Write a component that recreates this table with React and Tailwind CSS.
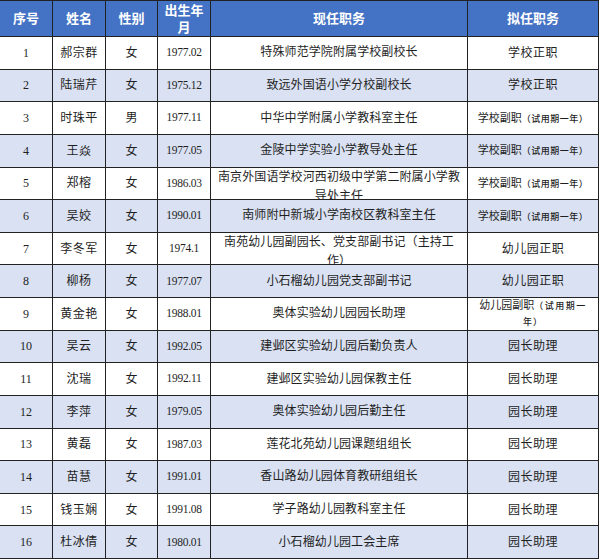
const rows = [
  ["1", "郝宗群", "女", "1977.02", ["特殊师范学院附属学校副校长"], "学校正职"],
  ["2", "陆瑞芹", "女", "1975.12", ["致远外国语小学分校副校长"], "学校正职"],
  ["3", "时珠平", "男", "1977.11", ["中华中学附属小学教科室主任"], "trial"],
  ["4", "王焱", "女", "1977.05", ["金陵中学实验小学教导处主任"], "trial"],
  ["5", "郑榕", "女", "1986.03", ["南京外国语学校河西初级中学第二附属小学教", "导处主任"], "trial"],
  ["6", "吴姣", "女", "1990.01", ["南师附中新城小学南校区教科室主任"], "trial"],
  ["7", "李冬军", "女", "1974.1", ["南苑幼儿园副园长、党支部副书记（主持工", "作）"], "幼儿园正职"],
  ["8", "柳杨", "女", "1977.07", ["小石榴幼儿园党支部副书记"], "幼儿园正职"],
  ["9", "黄金艳", "女", "1988.01", ["奥体实验幼儿园园长助理"], "kg-trial"],
  ["10", "吴云", "女", "1992.05", ["建邺区实验幼儿园后勤负责人"], "园长助理"],
  ["11", "沈瑞", "女", "1992.11", ["建邺区实验幼儿园保教主任"], "园长助理"],
  ["12", "李萍", "女", "1979.05", ["奥体实验幼儿园后勤主任"], "园长助理"],
  ["13", "黄磊", "女", "1987.03", ["莲花北苑幼儿园课题组组长"], "园长助理"],
  ["14", "苗慧", "女", "1991.01", ["香山路幼儿园体育教研组组长"], "园长助理"],
  ["15", "钱玉娴", "女", "1991.08", ["学子路幼儿园教科室主任"], "园长助理"],
  ["16", "杜冰倩", "女", "1980.01", ["小石榴幼儿园工会主席"], "园长助理"],
];

const cell =
  "flex justify-center overflow-hidden border-r border-b border-[#222] text-center";

function NewPost({ value }) {
  if (value === "trial") {
    return (
      <span className="whitespace-nowrap text-[11px]">
        学校副职
        <span className="text-[9px] font-medium tracking-[0.5px]">（试用期一年）</span>
      </span>
    );
  }
  if (value === "kg-trial") {
    return (
      <span className="block whitespace-nowrap text-[11px] leading-[15px]">
        幼儿园副职
        <span className="text-[9px] font-medium tracking-[1.5px]">（试用期一</span>
        <br />
        <span className="text-[9px] font-medium tracking-[1px]">年）</span>
      </span>
    );
  }
  return <span className="text-[12px] tracking-[0.5px]">{value}</span>;
}

export default function App() {
  return (
    <div
      className="w-[599px] h-[560px] bg-white text-[#1f1f1f]"
      style={{ fontFamily: '"Liberation Serif", "Noto Sans CJK SC", serif' }}
    >
      <div className="grid h-[559px] grid-cols-[53px_53px_52px_53px_257px_131px] grid-rows-[36px_repeat(16,minmax(0,1fr))] border-t border-[#222]">
        {/* header */}
        <div className={`${cell} items-center bg-[#4472c4] text-white text-[13px] font-semibold`}>序号</div>
        <div className={`${cell} items-center bg-[#4472c4] text-white text-[13px] font-semibold`}>姓名</div>
        <div className={`${cell} items-center bg-[#4472c4] text-white text-[13px] font-semibold`}>性别</div>
        <div className={`${cell} items-center bg-[#4472c4] text-white text-[13px] font-semibold leading-[17px]`}>
          <span>
            出生年
            <br />月
          </span>
        </div>
        <div className={`${cell} items-center bg-[#4472c4] text-white text-[13px] font-semibold`}>现任职务</div>
        <div className={`${cell} items-center bg-[#4472c4] text-white text-[13px] font-semibold`}>拟任职务</div>

        {rows.map((r, i) => {
          const bg = i % 2 === 1 ? "bg-[#d9e1f2]" : "bg-white";
          const multi = r[4].length > 1;
          return [
            <div key={`${i}a`} className={`${cell} items-center ${bg} text-[12px]`}>{r[0]}</div>,
            <div key={`${i}b`} className={`${cell} items-center ${bg} text-[12px] tracking-[0.5px]`}>{r[1]}</div>,
            <div key={`${i}c`} className={`${cell} items-center ${bg} text-[12px]`}>{r[2]}</div>,
            <div key={`${i}d`} className={`${cell} items-center ${bg} text-[11.5px] tracking-[-0.3px]`}>{r[3]}</div>,
            <div
              key={`${i}e`}
              className={`${cell} ${multi ? "items-start" : "items-center"} ${bg} text-[12px] tracking-[0.1px] leading-[19px]`}
            >
              <span className="whitespace-nowrap">
                {r[4].map((line, j) => (
                  <span key={j} className="block">{line}</span>
                ))}
              </span>
            </div>,
            <div key={`${i}f`} className={`${cell} items-center ${bg}`}>
              <NewPost value={r[5]} />
            </div>,
          ];
        })}
      </div>
    </div>
  );
}
